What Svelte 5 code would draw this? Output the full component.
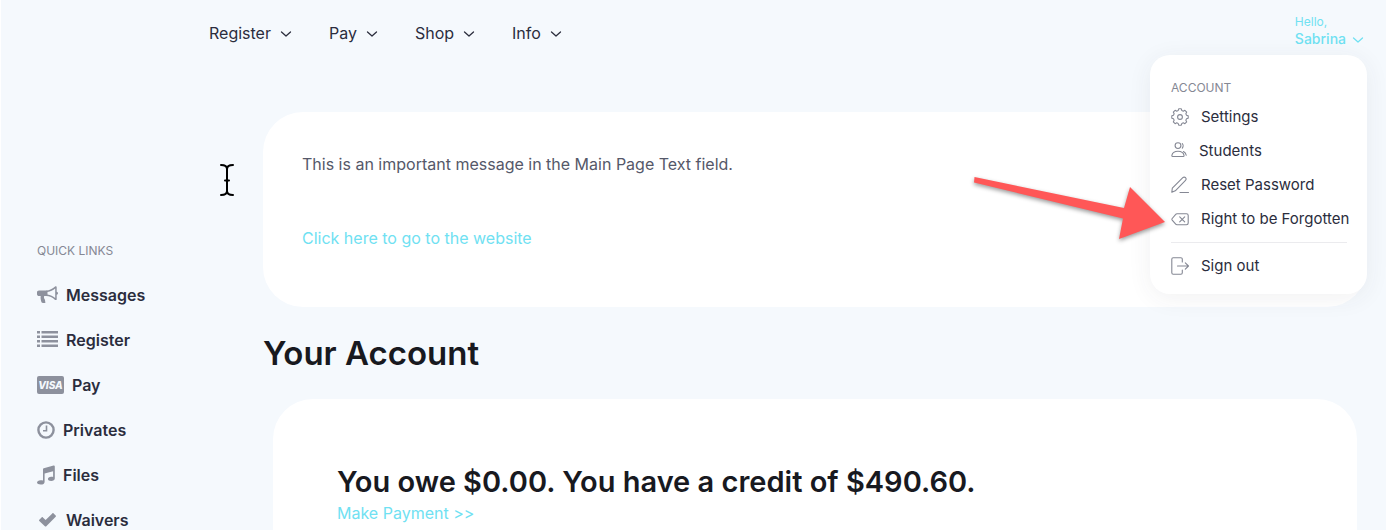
<script lang="ts">
	const navItems = ['Register', 'Pay', 'Shop', 'Info'];

	const quickLinks = [
		{ label: 'Messages', icon: 'bullhorn' },
		{ label: 'Register', icon: 'list' },
		{ label: 'Pay', icon: 'visa' },
		{ label: 'Privates', icon: 'clock' },
		{ label: 'Files', icon: 'music' },
		{ label: 'Waivers', icon: 'check' }
	];

	const accountLinks = [
		{ label: 'Settings', icon: 'gear' },
		{ label: 'Students', icon: 'people' },
		{ label: 'Reset Password', icon: 'pencil' },
		{ label: 'Right to be Forgotten', icon: 'erase' }
	];

	// eight teeth, four points each: two on the tip, two in the notch
	const gearPoints = Array.from({ length: 32 }, (_, i) => {
		const tip = i % 4 < 2;
		const radius = tip ? 8.3 : 6.7;
		const angle = ((Math.floor(i / 4) * 45 + [-9, 9, 16, 29][i % 4]) * Math.PI) / 180;
		return `${(9 + radius * Math.sin(angle)).toFixed(2)},${(9 - radius * Math.cos(angle)).toFixed(2)}`;
	}).join(' ');

	let menuOpen = $state(true);
</script>

{#snippet chevron()}
	<svg class="chevron" width="12" height="10" viewBox="0 0 12 10" aria-hidden="true">
		<path d="M1.500 4 6 8l4.500-4" />
	</svg>
{/snippet}

{#snippet sideIcon(name: string)}
	{#if name === 'bullhorn'}
		<svg width="21" height="18" viewBox="0 0 21 18">
			<path d="M2 4.500h7.500v5.500H7.200c-.6 1.500 0 2.400.6 3.600.5 1 .2 2.400.8 3-1.200.8-3.700.7-4.200-.5-.7-2.300-1-4-.7-6H2c-1.100 0-2-.8-2-1.800v-2C0 5.300.9 4.500 2 4.500z" />
			<path fill-rule="evenodd" d="M9 4.500c3.500 0 6.700-1.700 9.100-4 .7-.4 1.600 0 1.600.8v4.500c.8.2 1.300.8 1.300 1.500s-.5 1.300-1.300 1.500v4.400c0 .8-1 1.200-1.600.7C15.700 11.600 12.500 10 9 10zM18.200 2.400C16 4.200 13.500 5.500 10.500 5.900v2.700c3 .4 5.500 1.600 7.700 3.400z" />
		</svg>
	{:else if name === 'list'}
		<svg width="21" height="18" viewBox="0 0 21 18">
			<path d="M0 0h3v2.500H0zM4.500 0H21v2.500H4.500zM0 4.500h3V7H0zM4.500 4.500H21V7H4.500zM0 9h3v2.500H0zM4.500 9H21v2.500H4.500zM0 13.500h3V16H0zM4.500 13.500H21V16H4.500z" />
		</svg>
	{:else if name === 'visa'}
		<svg width="27" height="18" viewBox="0 0 27 18">
			<rect width="27" height="18" rx="2" />
			<text x="13.500" y="12.500" text-anchor="middle">VISA</text>
		</svg>
	{:else if name === 'clock'}
		<svg width="18" height="18" viewBox="0 0 18 18">
			<circle class="ring" cx="9" cy="9" r="7.600" />
			<path class="hands" d="M9.500 4.500v5.200H6" />
		</svg>
	{:else if name === 'music'}
		<svg width="18" height="20" viewBox="0 0 18 20">
			<path d="M6 4.300c0-.5.300-.9.800-1L16.600.5c.7-.2 1.200.2 1.200.9v12.100c0 1.500-1.500 2.500-3.600 2.500-2 0-3.300-.8-3.300-2s1.300-2.300 3.300-2.300c.8 0 1.400.1 1.900.4V6.200L7.600 8.500v8.400c0 1.600-1.500 2.600-3.900 2.600C1.500 19.500 0 18.800 0 17.500s1.500-2.300 3.700-2.300c.9 0 1.700.1 2.300.4z" />
		</svg>
	{:else}
		<svg width="21" height="18" viewBox="0 0 21 18">
			<path d="M2.300 8.700 4.600 6.400c.4-.4.900-.4 1.300 0l2.700 2.700 6.700-6.700c.4-.4.900-.4 1.300 0l2.100 2.100c.4.400.4.900 0 1.300l-9.400 9.400c-.4.400-1 .4-1.400 0L2.300 10c-.4-.4-.4-.9 0-1.300z" />
		</svg>
	{/if}
{/snippet}

{#snippet menuIcon(name: string)}
	{#if name === 'gear'}
		<svg width="18" height="18" viewBox="0 0 18 18">
			<circle cx="9" cy="9" r="2.400" />
			<polygon points={gearPoints} />
		</svg>
	{:else if name === 'people'}
		<svg width="16" height="18" viewBox="0 0 16 18">
			<circle cx="7" cy="3.600" r="2.900" />
			<path d="M1.500 14.500C.8 14.500.8 14 .9 13.400 1.400 10.500 4 9.200 7 9.200s5.500 1.300 6 4.200c.1.600.1 1.100-.6 1.100zM11.300 1.500c1.100 1.200 1.100 3.400 0 4.600M12.500 9.500c1.500.8 2.500 2 2.700 3.800" />
		</svg>
	{:else if name === 'pencil'}
		<svg width="18" height="18" viewBox="0 0 18 18">
			<path d="M.8 16.300 1.300 12.200 11.800 1.700c.8-.8 2-.8 2.700 0s.8 1.900 0 2.700L4.300 14.800zM9 16.500h8.500" />
		</svg>
	{:else if name === 'erase'}
		<svg width="18" height="18" viewBox="0 0 18 18">
			<path d="M6 3.800h9.500c1 0 1.700.7 1.700 1.700v7.600c0 1-.7 1.700-1.700 1.700H6c-.6 0-1-.2-1.300-.6L1.200 10.100c-.4-.5-.4-1.100 0-1.600l3.500-4.100c.3-.4.700-.6 1.300-.6zM8.700 6.800l5 5m0-5-5 5" />
		</svg>
	{:else}
		<svg width="18" height="18" viewBox="0 0 18 18">
			<path d="M11.300 5V2.200c0-.8-.6-1.400-1.400-1.400H2.200C1.400.8.8 1.400.8 2.200v13.600c0 .8.600 1.400 1.400 1.400h7.700c.8 0 1.400-.6 1.400-1.400V13M6.500 9h11M14.300 5.800 17.500 9l-3.200 3.200" />
		</svg>
	{/if}
{/snippet}

<div class="page">
	<header>
		<nav class="main-nav" aria-label="Main">
			{#each navItems as item}
				<button type="button">{item}{@render chevron()}</button>
			{/each}
		</nav>

		<div class="account">
			<button class="account-toggle" type="button" aria-expanded={menuOpen} onclick={() => (menuOpen = !menuOpen)}>
				<span class="hello">Hello,</span>
				<span class="name">Sabrina{@render chevron()}</span>
			</button>

			{#if menuOpen}
				<div class="menu">
					<h2 class="caption">ACCOUNT</h2>
					<ul>
						{#each accountLinks as link}
							<li><a href="#{link.icon}">{@render menuIcon(link.icon)}{link.label}</a></li>
						{/each}
					</ul>
					<hr />
					<a href="#signout">{@render menuIcon('signout')}Sign out</a>
				</div>
			{/if}
		</div>
	</header>

	<div class="columns">
		<aside>
			<h2 class="caption">QUICK LINKS</h2>
			<ul>
				{#each quickLinks as link}
					<li><a href="#{link.icon}">{@render sideIcon(link.icon)}{link.label}</a></li>
				{/each}
			</ul>
		</aside>

		<main>
			<section class="card message">
				<p>This is an important message in the Main Page Text field.</p>
				<a href="#website">Click here to go to the website</a>
			</section>

			<h1>Your Account</h1>

			<section class="card balance">
				<h2>You owe $0.00. You have a credit of $490.60.</h2>
				<a href="#payment">Make Payment &gt;&gt;</a>
			</section>
		</main>
	</div>

	<svg class="arrow" width="200" height="80" viewBox="0 0 200 80" aria-hidden="true">
		<path d="M4.500 7 154 38 160 17 195 52 149 69 153 48.500 4 12.500z" />
	</svg>
	<svg class="cursor" width="16" height="34" viewBox="0 0 16 34" aria-hidden="true">
		<path d="M2 2C5 2 8 3 8 6c0-3 3-4 6-4M8 5.500v23M2 32C5 32 8 31 8 28c0 3 3 4 6 4M6 17.500h4" />
	</svg>
</div>

<style>
	:global(body) {
		margin: 0;
		background: #f5f9fd;
	}

	.page {
		position: relative;
		box-sizing: border-box;
		min-height: 100vh;
		border-left: 1px solid #fff;
		overflow: hidden;
		color: #2b2d3d;
		font-family: Inter, "Liberation Sans", sans-serif;
		font-size: 16px;
		line-height: 24px;
	}

	h1,
	h2,
	p,
	ul {
		margin: 0;
		padding: 0;
	}

	ul {
		list-style: none;
	}

	a {
		color: #70e1f2;
		text-decoration: none;
	}

	button {
		padding: 0;
		border: 0;
		background: none;
		color: inherit;
		font: inherit;
		cursor: pointer;
	}

	header {
		display: flex;
		justify-content: space-between;
		align-items: center;
		box-sizing: border-box;
		height: 66px;
		padding: 0 22px 0 208px;
	}

	.main-nav {
		display: flex;
		gap: 37px;
	}

	.main-nav button {
		display: flex;
		align-items: center;
		gap: 9px;
	}

	.chevron {
		fill: none;
		stroke: currentColor;
		stroke-width: 1.3;
		stroke-linecap: round;
		stroke-linejoin: round;
	}

	.account {
		position: relative;
		z-index: 2;
	}

	.account-toggle {
		display: flex;
		flex-direction: column;
		padding-bottom: 4px;
		color: #70e1f2;
		text-align: left;
	}

	.hello {
		font-size: 12px;
		line-height: 16px;
	}

	.name {
		display: flex;
		align-items: center;
		gap: 6px;
		font-size: 14px;
		font-weight: 500;
		line-height: 18px;
	}

	.menu {
		position: absolute;
		top: calc(100% + 3px);
		right: -3px;
		box-sizing: border-box;
		width: 217px;
		padding: 24px 20px 11px 21px;
		border-radius: 20px;
		background: #fff;
		box-shadow: 0 4px 24px rgba(60, 60, 70, 0.07);
		white-space: nowrap;
	}

	.caption {
		color: #858894;
		font-size: 12px;
		font-weight: 400;
		line-height: 18px;
	}

	.menu ul {
		margin-top: 3px;
	}

	.menu a {
		display: flex;
		align-items: center;
		gap: 12px;
		height: 34px;
		color: #2b2d3d;
		font-size: 15px;
	}

	.menu svg {
		flex: none;
		fill: none;
		stroke: #858894;
		stroke-width: 1.1;
		stroke-linecap: round;
		stroke-linejoin: round;
	}

	hr {
		height: 1px;
		margin: 6px 0;
		border: 0;
		background: #ebebee;
	}

	.columns {
		display: grid;
		grid-template-columns: 262px minmax(0, 1fr);
		padding-right: 19px;
	}

	aside {
		padding: 176px 0 0 36px;
	}

	aside ul {
		margin-top: 12px;
	}

	aside a {
		display: flex;
		align-items: center;
		gap: 8px;
		height: 45px;
		color: #2b2d3d;
		font-weight: 600;
	}

	aside svg {
		flex: none;
		fill: #8d919d;
	}

	aside text {
		fill: #f5f9fd;
		font-size: 10px;
		font-style: italic;
		font-weight: 800;
	}

	.ring,
	.hands {
		fill: none;
		stroke: #8d919d;
		stroke-width: 2.4;
	}

	.hands {
		stroke-width: 1.6;
	}

	main {
		padding-top: 46px;
	}

	.card {
		border-radius: 40px;
		background: #fff;
	}

	.message {
		padding: 40px 39px 57px;
		color: #555869;
	}

	.message p {
		margin-bottom: 50px;
	}

	h1 {
		margin: 24px 0;
		color: #18191f;
		font-size: 33px;
		font-weight: 600;
		line-height: 44px;
	}

	.balance {
		margin: 0 10px;
		padding: 64px;
	}

	.balance h2 {
		color: #18191f;
		font-size: 29px;
		font-weight: 600;
		line-height: 38px;
	}

	.arrow,
	.cursor {
		position: absolute;
		pointer-events: none;
	}

	.arrow {
		top: 170px;
		right: 216px;
		z-index: 3;
		fill: #ff5757;
		filter: drop-shadow(0 2px 2px rgba(0, 0, 0, 0.4));
	}

	.cursor {
		top: 163px;
		left: 218px;
		fill: none;
		stroke: #000;
		stroke-width: 2;
		stroke-linecap: round;
	}
</style>
